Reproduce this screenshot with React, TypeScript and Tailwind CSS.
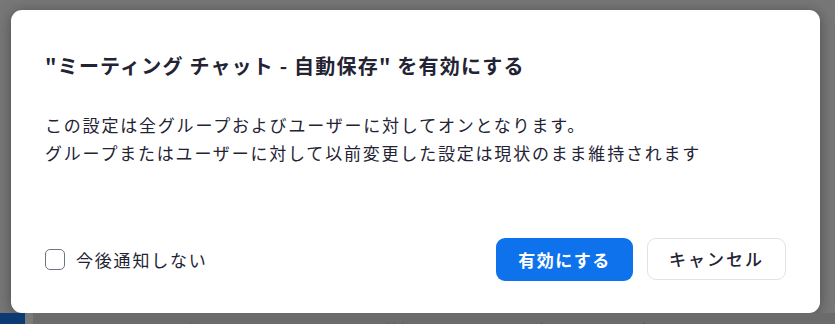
const jp = "font-['Noto_Sans_CJK_JP','Noto_Sans',sans-serif]";

function Checkbox() {
  return (
    <span className="block h-[21px] w-[20px] shrink-0 rounded-[5px] border border-[#6e7580] bg-white" />
  );
}

export default function App() {
  return (
    <div className={`flex h-[324px] w-[835px] flex-col overflow-hidden bg-[#777777] ${jp}`}>
      <div className="px-[11px] pt-[10px]">
        <div className="flex h-[303px] w-[809px] flex-col rounded-[11px] bg-white px-[34px] pt-[42px] pb-[32px] shadow-[0_2px_14px_rgba(0,0,0,0.35)]">
          <h2 className="text-[20px] leading-[28px] font-bold tracking-[1.2px] text-[#232333]">
            "ミーティング チャット - 自動保存" を有効にする
          </h2>

          <div className="mt-[31px] text-[17px] leading-[28px] tracking-[1.8px] text-[#232333]">
            <p>この設定は全グループおよびユーザーに対してオンとなります。</p>
            <p>グループまたはユーザーに対して以前変更した設定は現状のまま維持されます</p>
          </div>

          <div className="mt-auto flex items-center justify-between">
            <label className="flex items-center gap-[11px] text-[17px] tracking-[1.8px] text-[#232333]">
              <Checkbox />
              今後通知しない
            </label>
            <div className="flex gap-[14px]">
              <button className="h-[43px] w-[137px] rounded-[9px] bg-[#0e72ed] text-[17px] font-bold tracking-[1.5px] text-white">
                有効にする
              </button>
              <button className="h-[42px] w-[139px] rounded-[9px] border border-[#dfe3e8] bg-white text-[17px] font-medium tracking-[2px] text-[#232333]">
                キャンセル
              </button>
            </div>
          </div>
        </div>
      </div>

      <div className="flex h-[11px] overflow-hidden">
        <div className="w-[25px] shrink-0 bg-[#0d3a73]" />
        <div className="w-[8px] shrink-0 bg-[#7a7a7a]" />
        <div className="flex-1 bg-[#6b6b6b] pl-[60px] pt-[8px] text-[17px] leading-[20px] whitespace-nowrap text-[#4a4a4a]">
          ミーティングチャットのメッセージを送信するときには、次のように設定されます
        </div>
      </div>
    </div>
  );
}
